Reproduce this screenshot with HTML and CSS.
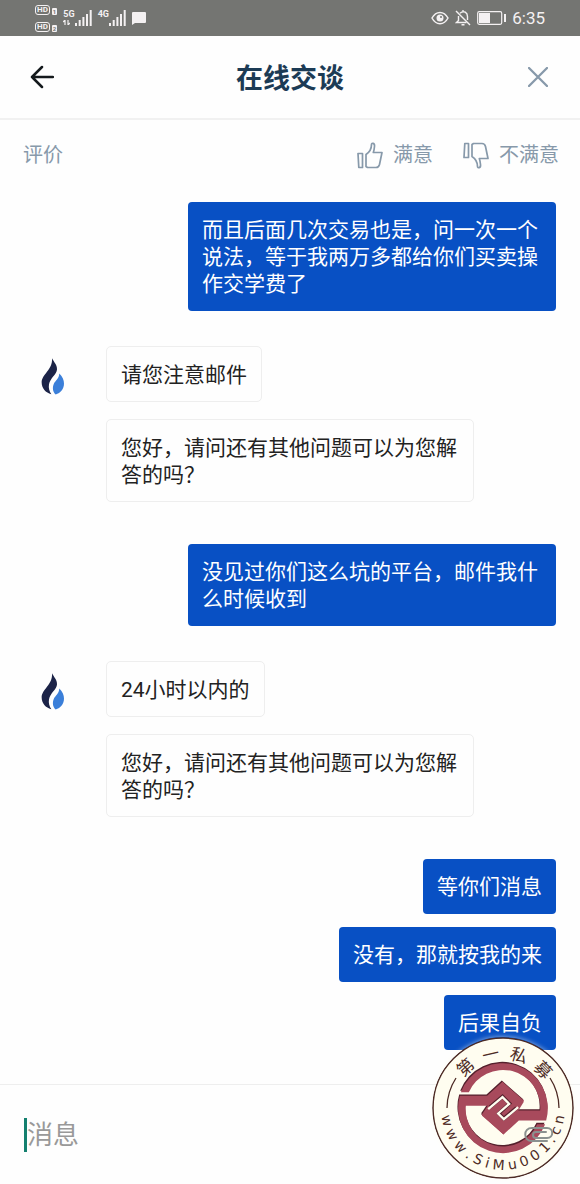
FILE: index.html
```html
<!DOCTYPE html>
<html lang="zh-CN">
  <head>
    <meta charset="UTF-8" />
    <meta name="viewport" content="width=device-width, initial-scale=1.0" />
    <title>在线交谈</title>
    <link rel="stylesheet" href="styles.css">
  </head>
  <body>
    <svg class="defs" aria-hidden="true">
      <symbol id="flame" viewBox="33 20 72 110">
        <path fill="#1b2347" d="M66 20C71 31 82 39 81 54C80 69 61 79 57 98C55 109 58 119 64 128C47 124 35 110 35 93C35 68 69 54 66 20Z" />
        <path fill="#3b7fd9" d="M88 66C98 76 102 86 102 96C102 112 92 125 77 129C68 121 67 108 71 98C76 87 87 82 88 66Z" />
      </symbol>
      <symbol id="bars" viewBox="0 0 17 16">
        <path fill="currentColor" d="M0 13h2v3H0zM3.700 10h2v6h-2zM7.400 7h2v9h-2zM11 4h2v12h-2zM14.700 0h2v16h-2z" />
      </symbol>
      <symbol id="thumb" viewBox="0 0 26 27">
        <g fill="none" stroke="currentColor" stroke-width="1.700" stroke-linejoin="round">
          <path d="M1 11.500h4.500V25.500H1.800z" />
          <path d="M9 12.500C12 10.500 14.500 7 14.500 2.500C14.500 .500 18 .800 17.500 4.500C17.300 6.800 17 8.500 16.300 10.500H25L22.500 22.500C22 24.500 21 25.500 19 25.500H10.500L9 24.500Z" />
        </g>
      </symbol>
    </svg>

    <div class="status-bar">
      <div class="status-left">
        <div class="sims">
          <div class="sim"><span class="hd">HD</span><span class="slot">1</span></div>
          <div class="sim"><span class="hd">HD</span><span class="slot">2</span></div>
        </div>
        <div class="network">
          <div class="network-type">
            <span>5G</span>
            <svg width="7" height="5" viewBox="0 0 7 5"><path d="M2 5V0L0 2M5 0v5l2-2" fill="none" stroke="currentColor" stroke-width="1.200" /></svg>
          </div>
          <svg width="17" height="16"><use href="#bars" /></svg>
        </div>
        <div class="network">
          <div class="network-type"><span>4G</span></div>
          <svg width="17" height="16"><use href="#bars" /></svg>
        </div>
        <svg class="chat-icon" width="14" height="13" viewBox="0 0 14 13"><path fill="currentColor" d="M1 0h12q1 0 1 1v9q0 1-1 1H3L0 13V1q0-1 1-1z" /></svg>
      </div>
      <div class="status-right">
        <svg width="18" height="14" viewBox="0 0 18 14">
          <path d="M1 7C5-.5 13-.5 17 7C13 14.500 5 14.500 1 7Z" fill="none" stroke="currentColor" stroke-width="1.500" />
          <circle cx="9" cy="7" r="3.500" fill="currentColor" />
          <circle cx="10" cy="6" r="1" fill="#747572" />
        </svg>
        <svg width="16" height="16" viewBox="0 0 16 16">
          <g fill="none" stroke="currentColor" stroke-width="1.400">
            <path d="M5 3.200C9-.3 12.500 3 12.500 6.500V10M11.500 12.500H1.500L3.500 10.500V6M6.500 14.800h3M8 0v2" />
            <path d="M1 1L15 15" />
          </g>
        </svg>
        <svg width="29" height="14" viewBox="0 0 29 14">
          <rect x="0.700" y="0.700" width="24" height="12.600" rx="1.500" fill="none" stroke="currentColor" stroke-width="1.200" />
          <path fill="currentColor" d="M2 2h11v10H2zM27 3h2v8h-2z" />
        </svg>
        <time>6:35</time>
      </div>
    </div>

    <header class="header">
      <button class="icon-button" type="button" aria-label="返回">
        <svg width="24" height="24" viewBox="0 0 24 24"><path d="M12 2L2 12L12 22M2 12H23" fill="none" stroke="#14191c" stroke-width="2.500" stroke-linecap="round" stroke-linejoin="round" /></svg>
      </button>
      <h1>在线交谈</h1>
      <button class="icon-button" type="button" aria-label="关闭">
        <svg width="20" height="20" viewBox="0 0 20 20"><path d="M1 1L19 19M19 1L1 19" fill="none" stroke="#8799aa" stroke-width="2.300" stroke-linecap="round" /></svg>
      </button>
    </header>

    <div class="rating">
      <span>评价</span>
      <div class="rating-actions">
        <button type="button"><svg width="26" height="27"><use href="#thumb" /></svg>满意</button>
        <button type="button"><svg class="thumb-down" width="26" height="27"><use href="#thumb" /></svg>不满意</button>
      </div>
    </div>

    <main class="thread">
      <section class="group mine">
        <p class="bubble">而且后面几次交易也是，问一次一个说法，等于我两万多都给你们买卖操作交学费了</p>
      </section>
      <section class="group agent">
        <svg class="avatar" width="24" height="37"><use href="#flame" /></svg>
        <div class="bubbles">
          <p class="bubble">请您注意邮件</p>
          <p class="bubble">您好，请问还有其他问题可以为您解答的吗？</p>
        </div>
      </section>
      <section class="group mine">
        <p class="bubble">没见过你们这么坑的平台，邮件我什么时候收到</p>
      </section>
      <section class="group agent">
        <svg class="avatar" width="24" height="37"><use href="#flame" /></svg>
        <div class="bubbles">
          <p class="bubble">24小时以内的</p>
          <p class="bubble">您好，请问还有其他问题可以为您解答的吗？</p>
        </div>
      </section>
      <section class="group mine">
        <p class="bubble">等你们消息</p>
        <p class="bubble">没有，那就按我的来</p>
        <p class="bubble">后果自负</p>
      </section>
    </main>

    <footer class="composer">
      <input type="text" placeholder="消息" aria-label="消息" />
      <button class="attach" type="button" aria-label="附件">
        <svg width="30" height="18" viewBox="0 0 30 18">
          <path d="M23 15H8C-1 15-1 2 8 2H23C30 2 30 12 23 12H12C8 12 8 6 12 6H22" fill="none" stroke="#8b918f" stroke-width="2" stroke-linecap="round" />
        </svg>
      </button>
    </footer>

    <svg class="seal" width="142" height="142" viewBox="0 0 142 142" role="img" aria-label="第一私募 www.SiMu001.cn">
      <defs>
        <path id="seal-top" d="M21 72A50 50 0 0 1 121 72" />
        <path id="seal-bottom" d="M9 71A62 62 0 0 0 133 71" />
        <g id="seal-mark">
          <path id="seal-half" d="M34 113A135 135 0 0 1 290 198H208L162 240L97 183L160 128L200 168H272A112 112 0 0 0 58 113Z" />
          <use href="#seal-half" transform="rotate(180 160.500 161)" />
          <path d="M160 87L223 142L162 240L97 180Z" />
        </g>
      </defs>
      <circle cx="71" cy="71" r="70" fill="#fffdf0" stroke="#4d2b25" stroke-width="1.500" />
      <path d="M15 71A56 56 0 0 1 24 41M118 41A56 56 0 0 1 127 71" fill="none" stroke="#4d2b25" stroke-width="1.300" />
      <g transform="translate(17.500 17.500) scale(.3333)">
        <use href="#seal-mark" fill="#54202c" transform="translate(-2 -4)" />
        <use href="#seal-mark" fill="#a84a5c" />
        <path d="M121 158L159 126L180 147L148 177L163 192L201 160" fill="none" stroke="#54202c" stroke-width="11" />
        <path d="M116 164L159 128L179 148L146 177L163 194L206 158" fill="none" stroke="#fffdf0" stroke-width="7" />
      </g>
      <text class="seal-name"><textPath href="#seal-top" startOffset="51%">第&#8194;一&#8194;私&#8194;募</textPath></text>
      <text class="seal-url"><textPath href="#seal-bottom" startOffset="50%">w w w . S i M u 0 0 1 . c n</textPath></text>
    </svg>
  </body>
</html>
```
FILE: styles.css
```css
* {
  box-sizing: border-box;
}

body {
  position: relative;
  display: flex;
  flex-direction: column;
  min-height: 100vh;
  margin: 0;
  background: #fefefe;
  color: #222;
  font-family: Roboto, 'Noto Sans CJK SC', sans-serif;
}

svg {
  display: block;
  flex-shrink: 0;
}

button {
  padding: 0;
  border: 0;
  background: none;
  color: inherit;
  font: inherit;
}

.defs {
  position: absolute;
  width: 0;
  height: 0;
}

/* Status bar */
.status-bar {
  display: flex;
  justify-content: space-between;
  align-items: center;
  height: 36px;
  padding: 0 35px;
  background: #747572;
  color: #f4f1f2;
}

.status-left,
.status-right,
.network,
.sim {
  display: flex;
  align-items: center;
}

.status-left,
.status-right {
  gap: 6px;
}

.status-right time {
  font-size: 17px;
  line-height: 20px;
}

.sims {
  display: grid;
  gap: 7px;
}

.sim {
  gap: 2px;
  align-items: flex-end;
}

.hd {
  padding: 0 1px;
  border: 1px solid currentColor;
  border-radius: 3px;
  font-size: 8px;
  font-weight: 700;
  line-height: 8px;
}

.slot {
  padding: 0 1px;
  border-radius: 1px;
  background: #f4f1f2;
  color: #747572;
  font-size: 6px;
  font-weight: 700;
  line-height: 7px;
}

.network-type {
  display: grid;
  align-content: start;
  gap: 2px;
  height: 16px;
  font-size: 9px;
  font-weight: 700;
  line-height: 8px;
}

/* Header */
.header {
  display: flex;
  justify-content: space-between;
  align-items: center;
  height: 84px;
  padding: 0 30px;
  border-bottom: 2px solid #f1f1f1;
}

.header h1 {
  margin: 0;
  padding-top: 4px;
  color: #1c3b55;
  font-size: 27px;
  font-weight: 700;
  line-height: 36px;
}

.icon-button {
  display: grid;
  place-items: center;
  width: 24px;
  height: 24px;
}

/* Rating */
.rating {
  display: flex;
  justify-content: space-between;
  align-items: center;
  padding: 21px 21px 0 23px;
  color: #8799aa;
  font-size: 20px;
  line-height: 28px;
}

.rating-actions {
  display: flex;
  gap: 30px;
}

.rating-actions button {
  display: flex;
  align-items: center;
  gap: 10px;
}

.thumb-down {
  transform: scaleY(-1);
}

/* Messages */
.thread {
  flex: 1;
  padding: 33px 24px 0 41px;
}

.group {
  display: flex;
}

.mine {
  flex-direction: column;
  align-items: flex-end;
  gap: 13px;
}

.agent {
  gap: 41px;
  padding: 35px 0 42px;
}

.avatar {
  margin-top: 12px;
}

.bubbles {
  display: flex;
  flex-direction: column;
  align-items: flex-start;
  gap: 17px;
}

.bubble {
  max-width: 368px;
  margin: 0;
  padding: 15px 14px 12px;
  border-radius: 4px;
  font-size: 21px;
  line-height: 27px;
}

.mine .bubble {
  padding-bottom: 13px;
  background: #0850c4;
  color: #fff;
}

.agent .bubble {
  border: 1px solid #eee;
  border-radius: 5px;
}

/* Composer */
.composer {
  display: flex;
  align-items: center;
  height: 100px;
  padding: 0 26px 0 24px;
  border-top: 1px solid #eee;
}

.composer input {
  flex: 1;
  min-width: 0;
  height: 34px;
  padding: 0;
  border: 0;
  border-left: 3px solid #14806f;
  outline: 0;
  background: none;
  font: inherit;
  font-size: 26px;
}

.composer input::placeholder {
  color: #999;
}

.attach {
  position: relative;
  z-index: 2;
}

/* Seal */
.seal {
  position: absolute;
  right: 6px;
  bottom: 5px;
  z-index: 1;
  border-radius: 50%;
  box-shadow: 0 0 5px rgba(255, 253, 240, 0.6);
}

.seal text {
  fill: #4d2b25;
  text-anchor: middle;
}

.seal-name {
  font-family: 'Noto Sans CJK SC', sans-serif;
  font-size: 17px;
}

.seal-url {
  font-family: 'DejaVu Sans', sans-serif;
  font-size: 14px;
}
```
